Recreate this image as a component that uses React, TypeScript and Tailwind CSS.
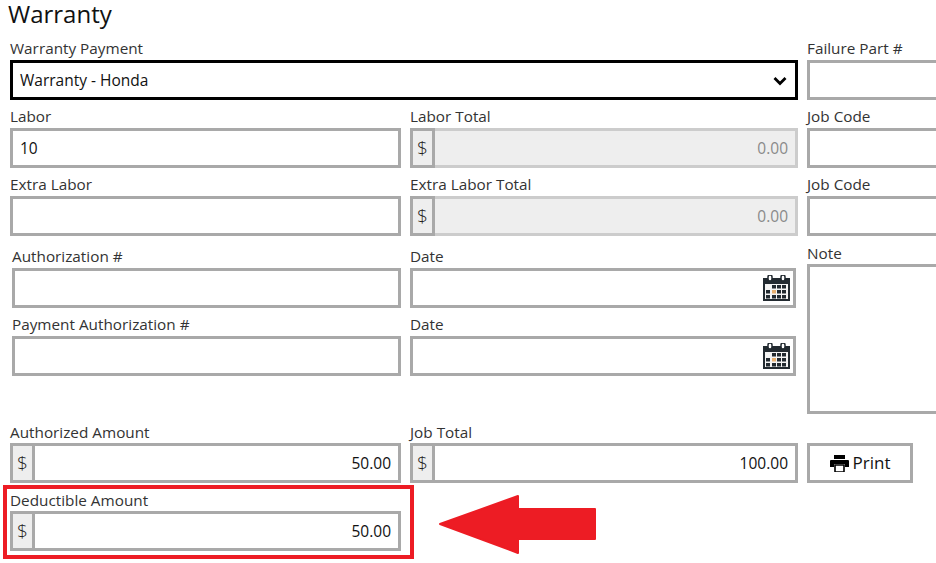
const fieldLabel = "block h-5 text-[15.3px] leading-4 text-[#333]";
const box = "h-10 border-[3px] border-[#a9a9a9] bg-white";

function Label({ text, className = "" }: { text: string; className?: string }) {
  return <label className={`${fieldLabel} ${className}`}>{text}</label>;
}

function CalendarIcon() {
  return (
    <svg width="27" height="26" viewBox="0 0 27 26" className="shrink-0">
      <rect x="0" y="3" width="27" height="23" fill="#222a30" />
      <rect x="5" y="0" width="4" height="6" rx="2" fill="#fff" stroke="#222a30" strokeWidth="1.5" />
      <rect x="18" y="0" width="4" height="6" rx="2" fill="#fff" stroke="#222a30" strokeWidth="1.5" />
      <rect x="2" y="9" width="23" height="15" fill="#f4f4f4" />
      {[10, 15, 20].map((y) =>
        [3, 8, 13, 18].map((x) => (
          <rect
            key={`${x}-${y}`}
            x={x + (x > 3 ? 1 : 0)}
            y={y}
            width="4"
            height="3.5"
            fill={x === 8 && y === 15 ? "#e8b070" : y === 10 && x === 3 ? "#f4f4f4" : "#222a30"}
          />
        )),
      )}
    </svg>
  );
}

function TextField({ value = "", className = "" }: { value?: string; className?: string }) {
  return (
    <div className={`${box} flex items-center px-[7px] pt-px text-[15.5px] text-[#111] ${className}`}>{value}</div>
  );
}

function MoneyField({ value, disabled = false }: { value: string; disabled?: boolean }) {
  return (
    <div className={`flex h-10 border-[3px] ${disabled ? "border-[#cccccc] bg-[#eeeeee]" : "border-[#a9a9a9] bg-white"}`}>
      <span className="-my-[3px] -ml-[3px] flex w-[25px] items-center justify-center border-[3px] border-[#a9a9a9] bg-[#eeeeee] text-[19px] font-light text-[#222]">
        $
      </span>
      <span
        className={`flex flex-1 items-center justify-end pr-[7px] pt-[2px] text-[15.5px] ${disabled ? "text-[#8a8a8a]" : "text-[#111]"}`}
      >
        {value}
      </span>
    </div>
  );
}

function DateField() {
  return (
    <div className={`${box} flex w-[386px] items-center justify-end pr-[3px]`}>
      <CalendarIcon />
    </div>
  );
}

function PrinterIcon() {
  return (
    <svg width="19" height="17" viewBox="0 0 19 17" className="shrink-0">
      <path d="M4 0h11v4H4z" fill="#000" />
      <path d="M1 5h17a1 1 0 0 1 1 1v6h-4V9H4v3H0V6a1 1 0 0 1 1-1z" fill="#000" />
      <path d="M5 10h9v7H5z" fill="#fff" stroke="#000" strokeWidth="1.6" />
    </svg>
  );
}

export default function App() {
  return (
    <div
      className="relative h-[563px] w-[936px] overflow-hidden bg-white"
      style={{ fontFamily: '"Open Sans", "Noto Sans", sans-serif' }}
    >
      <h1 className="h-10 pl-2 text-[24px] leading-[27px] text-[#111]">Warranty</h1>

      <div className="flex">
        <div className="ml-[10px] w-[788px]">
          <div className="h-[68px]">
            <Label text="Warranty Payment" />
            <div className="flex h-10 items-center justify-between border-[3px] border-black px-[7px] pt-px text-[15.5px] text-[#111]">
              Warranty - Honda
              <svg width="14" height="10" viewBox="0 0 14 10" className="mr-[1px]">
                <path d="M1.5 2l5.5 5.5L12.5 2" fill="none" stroke="#000" strokeWidth="2.8" />
              </svg>
            </div>
          </div>

          <div className="grid grid-cols-[391px_388px] gap-x-[9px] gap-y-2">
            <div>
              <Label text="Labor" />
              <TextField value="10" />
            </div>
            <div>
              <Label text="Labor Total" />
              <MoneyField value="0.00" disabled />
            </div>
            <div>
              <Label text="Extra Labor" />
              <TextField />
            </div>
            <div>
              <Label text="Extra Labor Total" />
              <MoneyField value="0.00" disabled />
            </div>
          </div>

          <div className="mt-3 grid grid-cols-[391px_388px] gap-x-[9px] gap-y-2">
            <div>
              <Label text="Authorization #" className="ml-[2px]" />
              <TextField className="ml-[2px]" />
            </div>
            <div>
              <Label text="Date" />
              <DateField />
            </div>
            <div>
              <Label text="Payment Authorization #" className="ml-[2px]" />
              <TextField className="ml-[2px]" />
            </div>
            <div>
              <Label text="Date" />
              <DateField />
            </div>
          </div>

          <div className="mt-[47px] grid grid-cols-[391px_388px] gap-x-[9px] gap-y-2">
            <div>
              <Label text="Authorized Amount" className="pt-px" />
              <MoneyField value="50.00" />
            </div>
            <div>
              <Label text="Job Total" className="pt-px" />
              <MoneyField value="100.00" />
            </div>
            <div>
              <Label text="Deductible Amount" className="pt-px" />
              <MoneyField value="50.00" />
            </div>
          </div>
        </div>

        <div className="ml-[9px] w-[160px] shrink-0">
          <Label text="Failure Part #" />
          <TextField className="mb-2" />
          <Label text="Job Code" />
          <TextField className="mb-2" />
          <Label text="Job Code" />
          <TextField className="mb-2" />
          <Label text="Note" className="pt-px" />
          <div className="h-[150px] border-[3px] border-[#a9a9a9]" />
          <button className="mt-[29px] flex h-10 w-[106px] items-center justify-center gap-1 border-[3px] border-[#a9a9a9] bg-white text-[17px] text-[#111]">
            <PrinterIcon />
            Print
          </button>
        </div>
      </div>

      {/* annotation drawn over the form */}
      <div className="absolute left-[3px] top-[485px] h-[74px] w-[411px] border-4 border-[#ed1c24]" />
      <svg width="160" height="62" viewBox="0 0 160 62" className="absolute left-[438px] top-[494px]">
        <path
          d="M2 30 L80 2 V15 H157 V45 H80 V59 Z"
          fill="#ed1c24"
          stroke="#ed1c24"
          strokeWidth="2"
          strokeLinejoin="round"
        />
      </svg>
    </div>
  );
}
